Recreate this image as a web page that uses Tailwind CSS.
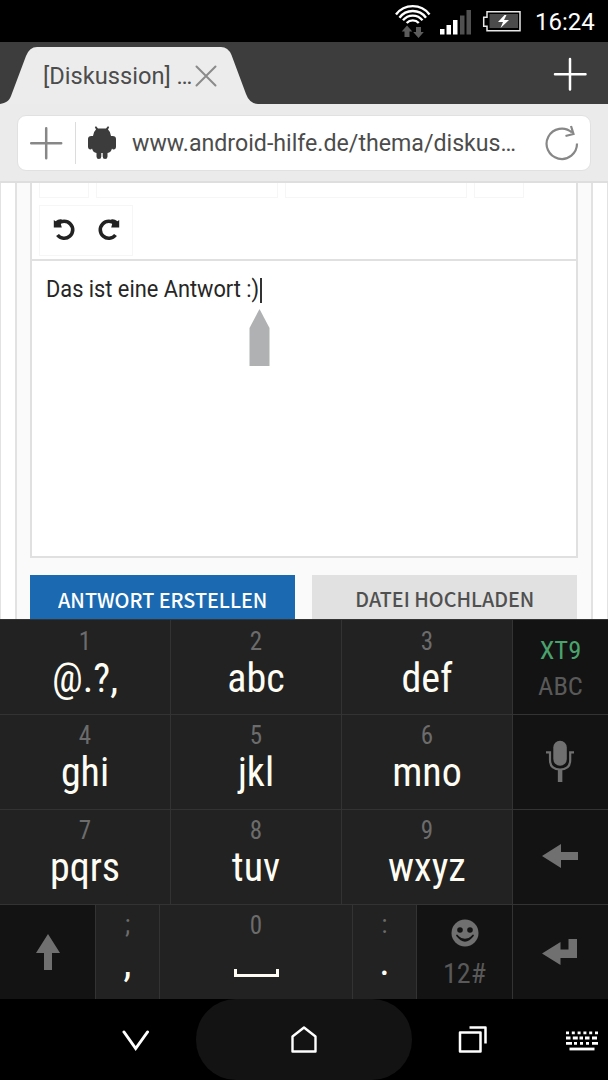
<!DOCTYPE html>
<html lang="de">
<head>
  <meta charset="UTF-8" />
  <meta name="viewport" content="width=device-width, initial-scale=1.0" />
  <title>[Diskussion] Android-Hilfe</title>
  <script src="https://cdn.jsdelivr.net/npm/@tailwindcss/browser@4"></script>
</head>
<body class="bg-black font-[Roboto,sans-serif]">
  <div class="w-[608px] h-[1080px] flex flex-col overflow-hidden">

    <!-- Status bar -->
    <header class="h-[42px] shrink-0 bg-black flex justify-end text-white">
      <svg class="w-[136px] h-[42px]" viewBox="392 0 136 42" fill="none">
        <g stroke="#fff" stroke-width="2.400">
          <path d="M396 14.500A21 21 0 0 1 429.500 14.500" />
          <path d="M399.500 17.700A16.500 16.500 0 0 1 426 17.700" />
          <path d="M403 20.300A12.500 12.500 0 0 1 422.500 20.300" />
          <path d="M406.700 23A8.200 8.200 0 0 1 418.800 23" />
        </g>
        <path fill="#5c5c5c" d="M407 25.500l5.300 6h-2.800v5.500h-5v-5.500h-2.800zM418.500 38l-5.300-6h2.800v-5h5v5h2.800z" />
        <path fill="#fff" d="M440 29h4.500v5.500H440zM446.500 25h4.500v9.500h-4.500zM453 20h4.500v14.500H453z" />
        <path fill="#505050" d="M460 15.500h4.500v19H460zM466.500 10h4.500v24.500h-4.500z" />
        <path stroke="#e8e8e8" stroke-width="1.500" d="M487 11.700h33v19h-33v-4.500h-3.300v-9H487z" />
        <path fill="#4b4b4b" d="M489.500 14h28.500v14h-28.500z" />
        <path fill="#fff" d="M504.500 15l-6.500 7h5l-2.500 6 8.500-8h-5l2.500-5z" />
      </svg>
      <span class="w-[80px] pl-[7px] text-[24px] leading-[44px] whitespace-nowrap">16:24</span>
    </header>

    <!-- Tab strip -->
    <div class="h-[62px] shrink-0 bg-[#3d3d3d] relative flex justify-between items-center">
      <svg class="absolute inset-0 w-[270px] h-[62px]" viewBox="0 42 270 62">
        <path fill="#ececec" d="M0 104C6 103 9 101 11 96L26 56Q29.500 47 37 47H221Q228 47 231.500 55L246 94Q249.500 103.500 258 104z" />
      </svg>
      <div class="relative flex items-center pl-[43px] pt-[6px]">
        <span class="w-[151px] text-[24px] leading-8 text-[#4c4c4c] whitespace-nowrap"><span class="inline-block origin-left scale-x-[.985]">[Diskussion] …</span></span>
        <svg class="w-6 h-6" viewBox="0 0 24 24" stroke="#8a8a8a" stroke-width="2" stroke-linecap="round"><path d="M2.500 2.500l19 19M21.500 2.500l-19 19" /></svg>
      </div>
      <svg class="w-[34px] h-[34px] mr-[21px] mt-0.5" viewBox="0 0 34 34" stroke="#fff" stroke-width="2.500" stroke-linecap="round"><path d="M17 2v30.500M2 17.200h30.500" /></svg>
    </div>

    <!-- Address bar -->
    <div class="h-[79px] shrink-0 bg-[#ebebeb] border-b-2 border-[#dedede] pt-[11px] px-[17px]">
      <div class="h-[56px] w-[574px] bg-white border border-[#e1e1e1] rounded-[9px] flex items-center">
        <svg class="w-[34px] h-[34px] ml-[11px]" viewBox="0 0 34 34" stroke="#878787" stroke-width="2.500" stroke-linecap="round"><path d="M17.200 2.200v30M2.200 17.200h30" /></svg>
        <span class="w-px h-[42px] ml-[12px] bg-[#dcdcdc]"></span>
        <svg class="w-[30px] h-[34px] ml-[11px]" viewBox="87 126 30 34" fill="#3c3c3c">
          <path d="M96 129.500l-1.200-2.500 1.300-.8 1.900 2.300h8l1.900-2.300 1.300.8-1.200 2.500q2.500 2 3 6.500h1.500q3.500 0 3.500 3v7.500q0 3-2.500 3-1 0-1.500-1-1 4-4.500 4.500v3.500q0 2.500-2.400 2.500t-2.400-2.500v-3.500h-1.400v3.500q0 2.500-2.400 2.500t-2.400-2.500v-3.500q-3.500-.5-4.500-4.500-.5 1-1.500 1-2.500 0-2.500-3v-7.500q0-3 3.500-3h1.500q.5-4.500 3-6.500z" />
        </svg>
        <span class="ml-[15px] w-[412px] text-[24px] leading-8 text-[#4c4c4c] whitespace-nowrap"><span class="inline-block origin-left scale-x-[.965]">www.android-hilfe.de/thema/diskus…</span></span>
        <svg class="w-[36px] h-[38px]" viewBox="544 124 36 38" fill="none" stroke="#878787" stroke-width="2.200"><path d="M577 143.500A15.200 15.200 0 1 1 572 132.500M571 126L573.500 134L565.500 136" /></svg>
      </div>
    </div>

    <!-- Forum page -->
    <main class="h-[436px] shrink-0 bg-white border-x border-[#e2e2e2] px-[14px] overflow-hidden">
      <div class="h-full bg-[#fafafa] border-x-2 border-[#e2e2e2] px-[13px]">
        <div class="h-[375px] bg-white border-2 border-t-0 border-[#e0e0e0]">
          <div class="h-[78px] border-b-2 border-[#e0e0e0] px-[7px]">
            <div class="flex gap-[7px]">
              <span class="w-[50px] h-[15px] border border-t-0 border-[#f6f6f6]"></span>
              <span class="w-[182px] h-[15px] border border-t-0 border-[#f6f6f6]"></span>
              <span class="w-[182px] h-[15px] border border-t-0 border-[#f6f6f6]"></span>
              <span class="w-[50px] h-[15px] border border-t-0 border-[#f6f6f6]"></span>
            </div>
            <div class="mt-[7px] w-[94px] h-[51px] border border-[#f6f6f6] flex items-center pl-[13px] pb-[4px] gap-[20px]">
              <svg class="w-6 h-6" viewBox="0 0 24 24" fill="none"><path stroke="#222" stroke-width="3.600" d="M5 7A8.500 8.500 0 1 1 4.500 18" /><path fill="#222" d="M.8 3L2.500 4.200Q6 1.500 9 2.500L7.500 6L8.800 10.500H.8z" /></svg>
              <svg class="w-6 h-6" viewBox="0 0 24 24" fill="none"><path stroke="#222" stroke-width="3.600" d="M18 7A8.500 8.500 0 1 0 18.500 18" /><path fill="#222" d="M22.200 3L20.500 4.200Q17 1.500 14 2.500L15.500 6L14.200 10.500H22.200z" /></svg>
            </div>
          </div>
          <div class="relative pl-[14px] pt-[13px] text-[23px] leading-8 text-[#262626] whitespace-nowrap">
            <span class="inline-block origin-left scale-x-[.947]">Das ist eine Antwort :)</span>
            <span class="absolute left-[228px] top-[17px] w-[2px] h-[25px] bg-[#333]"></span>
            <svg class="absolute left-[217px] top-[48px] w-[21px] h-[57px]" viewBox="0 0 21 57"><path fill="#b0b1b2" d="M10.500 0L20.500 19V57H.5V19z" /></svg>
          </div>
        </div>
        <div class="mt-[17px] flex gap-[17px] font-['Noto_Sans_CJK_SC',sans-serif] text-[20px] font-medium whitespace-nowrap">
          <span class="w-[265px] h-[60px] bg-[#1b69b0] text-white text-center leading-[50px]"><span class="inline-block scale-x-[.99]">ANTWORT ERSTELLEN</span></span>
          <span class="w-[265px] h-[60px] bg-[#e1e1e1] text-[#505050] text-center leading-[47px]"><span class="inline-block scale-x-[.985]">DATEI HOCHLADEN</span></span>
        </div>
      </div>
    </main>

    <!-- Keyboard -->
    <section class="h-[380px] shrink-0 bg-[#222] font-['Roboto_Condensed',Roboto,sans-serif] text-center text-[#fffdf3]">
      <div class="h-[95px] border-t border-[#333] grid grid-cols-[171px_171px_171px_95px]">
        <div class="border-r border-[#333] pt-[10px]"><p class="text-[25px] leading-6 text-[#6c6c6c]">1</p><p class="mt-[5px] text-[40px] leading-10">@.?,</p></div>
        <div class="border-r border-[#333] pt-[10px]"><p class="text-[25px] leading-6 text-[#6c6c6c]">2</p><p class="mt-[5px] text-[40px] leading-10">abc</p></div>
        <div class="border-r border-[#333] pt-[10px]"><p class="text-[25px] leading-6 text-[#6c6c6c]">3</p><p class="mt-[5px] text-[40px] leading-10">def</p></div>
        <div class="bg-[#131313] pt-[11px] text-[26.500px] leading-[37px]"><p class="text-[#4aa26c]">XT9</p><p class="-mt-px text-[#595959]">ABC</p></div>
      </div>
      <div class="h-[95px] border-t border-[#333] grid grid-cols-[171px_171px_171px_95px]">
        <div class="border-r border-[#333] pt-[9px]"><p class="text-[25px] leading-6 text-[#6c6c6c]">4</p><p class="mt-[5px] text-[40px] leading-10">ghi</p></div>
        <div class="border-r border-[#333] pt-[9px]"><p class="text-[25px] leading-6 text-[#6c6c6c]">5</p><p class="mt-[5px] text-[40px] leading-10">jkl</p></div>
        <div class="border-r border-[#333] pt-[9px]"><p class="text-[25px] leading-6 text-[#6c6c6c]">6</p><p class="mt-[5px] text-[40px] leading-10">mno</p></div>
        <div class="bg-[#131313] flex justify-center pt-[25px] pr-[2px]">
          <svg class="w-7 h-[43px]" viewBox="545.500 740 28 43" fill="none"><rect x="552.800" y="740.800" width="13.500" height="25" rx="6.700" fill="#707070" /><path stroke="#707070" stroke-width="2.200" d="M545.500 752.300H549.500V760Q549.500 769.500 559.600 769.500Q569.700 769.500 569.700 760V752.300H573.500" /><path stroke="#707070" stroke-width="4.500" d="M559.600 769V782" /></svg>
        </div>
      </div>
      <div class="h-[95px] border-t border-[#333] grid grid-cols-[171px_171px_171px_95px]">
        <div class="border-r border-[#333] pt-[9px]"><p class="text-[25px] leading-6 text-[#6c6c6c]">7</p><p class="mt-[5px] text-[40px] leading-10">pqrs</p></div>
        <div class="border-r border-[#333] pt-[9px]"><p class="text-[25px] leading-6 text-[#6c6c6c]">8</p><p class="mt-[5px] text-[40px] leading-10">tuv</p></div>
        <div class="border-r border-[#333] pt-[9px]"><p class="text-[25px] leading-6 text-[#6c6c6c]">9</p><p class="mt-[5px] text-[40px] leading-10">wxyz</p></div>
        <div class="bg-[#131313] flex justify-center pt-[34px] pr-[2px]">
          <svg class="w-9 h-6" viewBox="0 0 36 24"><path fill="#707070" d="M0 12L19 0V8H36V16H19V24z" /></svg>
        </div>
      </div>
      <div class="h-[95px] border-t border-[#333] grid grid-cols-[96px_64px_193px_64px_96px_95px]">
        <div class="bg-[#131313] border-r border-[#333] flex justify-center pt-[29px]">
          <svg class="w-6 h-9" viewBox="0 0 24 36"><path fill="#707070" d="M12 0L24 19H16V36H8V19H0z" /></svg>
        </div>
        <div class="border-r border-[#333] pt-[8px]"><p class="text-[25px] leading-6 text-[#6c6c6c]">;</p><p class="mt-1.5 text-[40px] leading-10">,</p></div>
        <div class="border-r border-[#333] pt-[9px] flex flex-col items-center"><p class="text-[25px] leading-6 text-[#6c6c6c]">0</p>
          <span class="mt-[31px] w-[45px] h-[8px] border-[3px] border-t-0 border-[#fffdf3]"></span>
        </div>
        <div class="border-r border-[#333] pt-[8px]"><p class="text-[25px] leading-6 text-[#6c6c6c]">:</p><p class="mt-[5px] text-[40px] leading-10">.</p></div>
        <div class="bg-[#131313] border-r border-[#333] flex flex-col items-center pt-[14px]">
          <svg class="w-7 h-7" viewBox="0 0 28 28"><circle cx="14" cy="14" r="13.500" fill="#707070" /><circle cx="9" cy="11" r="2.800" fill="#131313" /><circle cx="19" cy="11" r="2.800" fill="#131313" /><path fill="none" stroke="#131313" stroke-width="1.800" stroke-linecap="round" d="M6 16.500Q14 27 22 16.500" /><path fill="#131313" d="M6.500 16.500Q14 23 21.500 16.500Q14 27 6.500 16.500" /></svg>
          <p class="mt-[9px] text-[28px] leading-9 text-[#595959]">12#</p>
        </div>
        <div class="bg-[#131313] flex justify-center pt-[34px] pr-[2px]">
          <svg class="w-[35px] h-[27px]" viewBox="0 0 35 27"><path fill="#707070" d="M0 14.500L18.500 3V10.500H26.500V0H35V19H18.500V26z" /></svg>
        </div>
      </div>
    </section>

    <!-- Navigation bar -->
    <nav class="h-[81px] shrink-0 bg-black grid grid-cols-[196px_216px_196px]">
      <div class="flex justify-end pr-[46px] pt-[31px]">
        <svg class="w-7 h-[22px]" viewBox="0 0 28 22" fill="none" stroke="#fff" stroke-width="3" stroke-linecap="round"><path d="M2 2L13.700 18.500L25.500 2" /></svg>
      </div>
      <div class="bg-[#131313] rounded-[40px] flex justify-center pt-[26px]">
        <svg class="w-7 h-7" viewBox="0 0 28 28" fill="none" stroke="#fff" stroke-width="2.400" stroke-linejoin="round"><path d="M2.500 11.500L14 2.500L25.500 11.500V26.500H2.500z" /></svg>
      </div>
      <div class="flex pl-[46px] pt-[27px]">
        <svg class="w-[30px] h-7" viewBox="0 0 30 28" fill="none" stroke="#fff" stroke-width="2.500" stroke-linejoin="round"><path d="M2 6.500H22.500V25.500H2zM11.500 1.500H27.500V17.500" /></svg>
        <svg class="w-8 h-5 ml-[78px] mt-[5px] overflow-visible" viewBox="0 0 32 20" stroke="#fff" stroke-width="2.800">
          <path stroke-dasharray="3 2.800" d="M0 1.800H32" />
          <path stroke-dasharray="4.500 2.300 5 1.700 3.500 2 4.500 2.500 5 2" d="M0 7H32" />
          <path stroke-dasharray="6 2 3 3 3 3 3 3 6 2" d="M0 12.300H32" />
          <path d="M3.500 18H28.500" />
        </svg>
      </div>
    </nav>
  </div>
</body>
</html>
